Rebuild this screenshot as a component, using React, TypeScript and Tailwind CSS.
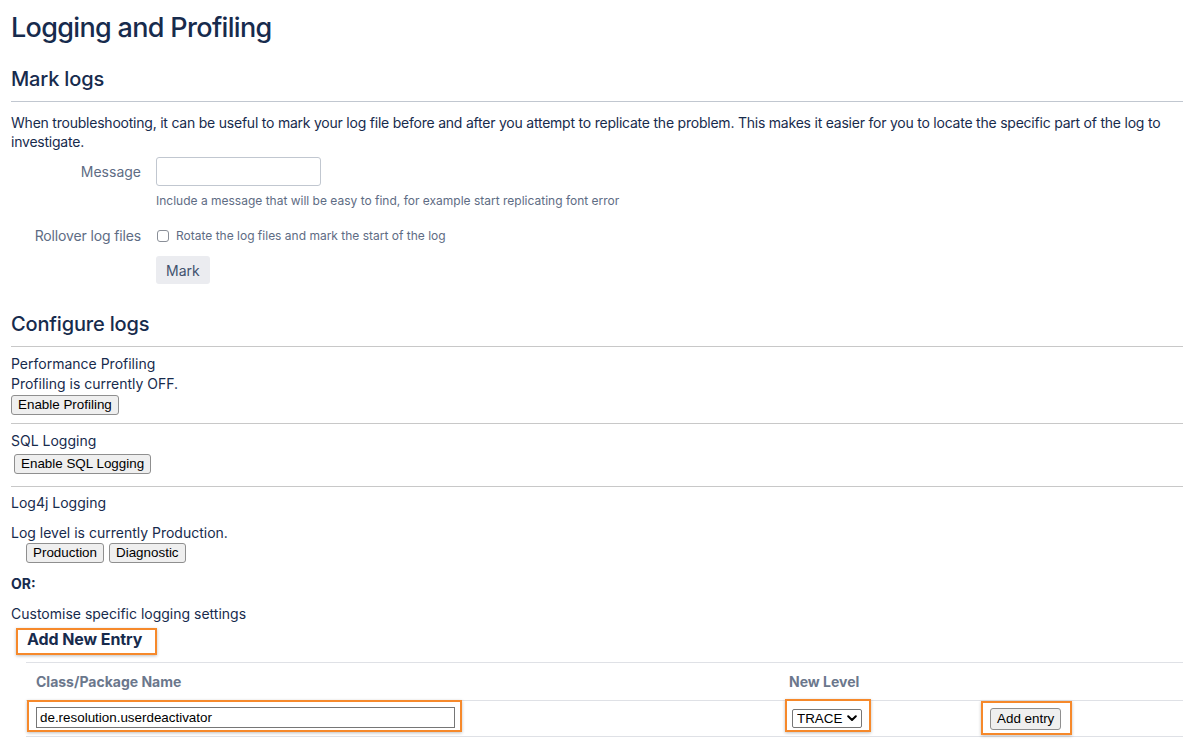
import React from 'react';

const nativeBtn =
  "h-[20px] px-[6px] bg-[#efefef] border border-[#8f8f8f] rounded-[3px] text-[13.4px] leading-[18px] text-black font-['Liberation_Sans',Arial,sans-serif]";

const orangeBox = 'border-2 border-[#f6892b] shadow-[0_1px_3px_rgba(0,0,0,0.25)]';

const Section: React.FC<{ title: string }> = ({ title }) => (
  <h2 className="text-[20px] leading-[24px] font-medium tracking-[-0.008em]">{title}</h2>
);

export default function App() {
  return (
    <div className="min-h-screen bg-white pl-[11px] pr-[21px] text-[#172B4D] text-[14px] font-['Inter','Noto_Sans',sans-serif]">
      <h1 className="pt-[12px] text-[27px] leading-[32px] font-medium tracking-[-0.025em]">Logging and Profiling</h1>

      <div className="mt-[23px]">
        <Section title="Mark logs" />
      </div>
      <hr className="mt-[10px] border-t border-[#c1c7d0]" />
      <p className="mt-[11px] leading-[19px] tracking-[-0.016em]">
        When troubleshooting, it can be useful to mark your log file before and after you attempt to replicate the problem. This makes it easier for you to locate the specific part of the log to investigate.
      </p>

      {/* mark form */}
      <div className="mt-[6px] flex items-center gap-[15px]">
        <label className="w-[130px] text-right text-[#5e6c84]">Message</label>
        <input type="text" className="w-[165px] h-[29px] border border-[#c1c7d0] rounded-[3px] bg-white" />
      </div>
      <div className="mt-[7px] ml-[145px] text-[12px] leading-[16px] text-[#5e6c84]">
        Include a message that will be easy to find, for example start replicating font error
      </div>
      <div className="mt-[17px] flex items-center gap-[15px] leading-[20px]">
        <label className="w-[130px] text-right text-[#5e6c84] tracking-[-0.01em]">Rollover log files</label>
        <div className="flex items-center gap-[7px]">
          <span className="ml-[1px] w-[12px] h-[12px] border border-[#8a8f98] rounded-[3px] bg-white" />
          <span className="text-[12px] text-[#5e6c84]">Rotate the log files and mark the start of the log</span>
        </div>
      </div>
      <button className="mt-[10px] ml-[145px] h-[28px] px-[10px] rounded-[3px] bg-[#ebecf0] text-[#42526e]">Mark</button>

      <div className="mt-[28px]">
        <Section title="Configure logs" />
      </div>
      <hr className="mt-[10px] border-t border-[#c8c8c8]" />

      <div className="mt-[7px] leading-[20px]">
        <div>Performance Profiling</div>
        <div>Profiling is currently OFF.</div>
        <button className={nativeBtn}>Enable Profiling</button>
      </div>
      <hr className="mt-[8px] border-t border-[#c8c8c8]" />

      <div className="mt-[7px] leading-[20px]">SQL Logging</div>
      <button className={`mt-[3px] ml-[3px] ${nativeBtn}`}>Enable SQL Logging</button>
      <hr className="mt-[12px] border-t border-[#c8c8c8]" />

      <div className="mt-[6px] leading-[20px]">Log4j Logging</div>
      <div className="mt-[10px] leading-[20px]">Log level is currently Production.</div>
      <div className="ml-[15px] flex gap-[5px]">
        <button className={nativeBtn}>Production</button>
        <button className={nativeBtn}>Diagnostic</button>
      </div>
      <div className="mt-[11px] leading-[20px] font-bold">OR:</div>
      <div className="mt-[10px] leading-[20px]">Customise specific logging settings</div>

      <div className={`mt-[4px] ml-[5px] w-[141px] h-[27px] pl-[9px] ${orangeBox}`}>
        <span className="block text-[16px] leading-[17px] pt-[1px] font-bold tracking-[-0.005em]">Add New Entry</span>
      </div>

      {/* entry table */}
      <div className="mt-[7px] ml-[15px]">
        <div className="grid grid-cols-[753px_201px_1fr] h-[38px] items-center border-t border-[#dfe1e6] font-bold text-[#6b778c]">
          <div className="pl-[10px]">Class/Package Name</div>
          <div className="pl-[10px]">New Level</div>
          <div />
        </div>
        <div className="grid grid-cols-[753px_201px_1fr] h-[37px] items-start border-t border-b border-[#dfe1e6]">
          <div className="pl-[1px] -mt-[1px]">
            <div className={`inline-block pl-[7px] pr-[5px] pt-[5px] pb-[2px] ${orangeBox}`}>
              <input
                type="text"
                defaultValue="de.resolution.userdeactivator"
                className="block w-[419px] h-[21px] px-[3px] border border-[#767676] text-[13.4px] text-black bg-white font-['Liberation_Sans',Arial,sans-serif]"
              />
            </div>
          </div>
          <div className="pl-[6px] -mt-[2px]">
            <div className={`inline-block pl-[5px] pr-[7px] pt-[8px] pb-[2px] ${orangeBox}`}>
              <div className="relative w-[70px] h-[19px]">
                <select className="block appearance-none w-full h-full pl-[4px] border border-[#767676] rounded-[2px] bg-white text-[13.4px] leading-[17px] text-black font-['Liberation_Sans',Arial,sans-serif]">
                  <option>TRACE</option>
                </select>
                <svg className="absolute right-[5px] top-[6px] pointer-events-none" width="10" height="7" viewBox="0 0 10 7">
                  <path d="M1.2 1.2 L5 5 L8.8 1.2" fill="none" stroke="#000" strokeWidth="2" strokeLinecap="round" strokeLinejoin="round" />
                </svg>
              </div>
            </div>
          </div>
          <div className="pl-[1px]">
            <div className={`inline-block pl-[7px] pr-[9px] pt-[4px] pb-[3px] ${orangeBox}`}>
              <button className={`h-[22px] ${nativeBtn}`}>Add entry</button>
            </div>
          </div>
        </div>
      </div>
    </div>
  );
}
